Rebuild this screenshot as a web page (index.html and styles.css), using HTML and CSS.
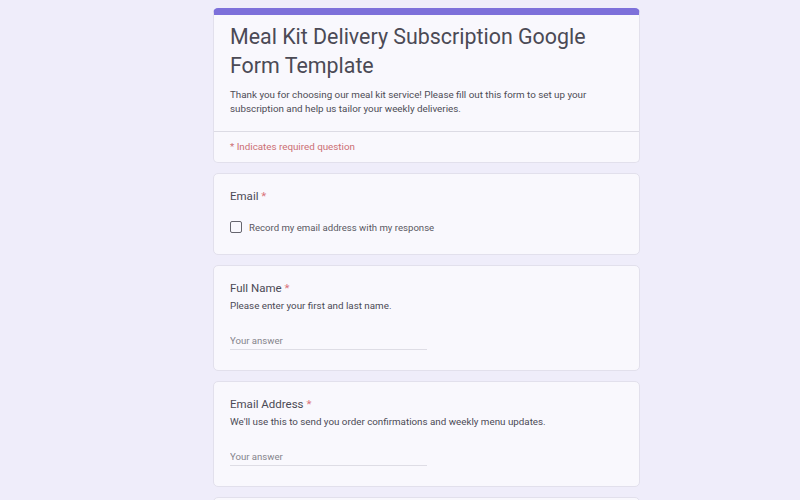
FILE: index.html
```html
<!DOCTYPE html>
<html lang="en">
<head>
    <meta charset="UTF-8">
    <meta name="viewport" content="width=device-width, initial-scale=1.0">
    <title>Meal Kit Delivery Subscription Google Form Template</title>
    <link rel="stylesheet" href="styles.css">
</head>
<body>
    <div class="form-wrap">
        <div class="card header-card">
            <div class="header-main">
                <h1>Meal Kit Delivery Subscription Google Form Template</h1>
                <p class="form-desc">Thank you for choosing our meal kit service! Please fill out this form to set up your subscription and help us tailor your weekly deliveries.</p>
            </div>
            <div class="required-note">* Indicates required question</div>
        </div>

        <div class="card question">
            <div class="q-title">Email <span class="star">*</span></div>
            <label class="check-row">
                <span class="checkbox"></span>
                Record my email address with my response
            </label>
        </div>

        <div class="card question">
            <div class="q-title">Full Name <span class="star">*</span></div>
            <div class="q-desc">Please enter your first and last name.</div>
            <input type="text" class="answer" placeholder="Your answer">
        </div>

        <div class="card question">
            <div class="q-title">Email Address <span class="star">*</span></div>
            <div class="q-desc">We'll use this to send you order confirmations and weekly menu updates.</div>
            <input type="text" class="answer" placeholder="Your answer">
        </div>

        <!-- next question starts below the fold -->
        <div class="card question next-card"></div>
    </div>
</body>
</html>
```

FILE: styles.css
```css
body {
    margin: 0;
    background-color: #efedfa;
    font-family: Roboto, "Liberation Sans", Arial, sans-serif;
    color: #202124;
}
.form-wrap {
    width: 427px;
    margin: 8px 0 0 213px;
    display: flex;
    flex-direction: column;
    gap: 10px;
}
.card {
    background-color: #f9f8fd;
    border: 1px solid #e2e0ec;
    border-radius: 5px;
}
.header-card {
    border-top: 7px solid #7d70da;
}
.header-main {
    padding: 7px 16px 16px;
    border-bottom: 1px solid #dcdbe4;
}
h1 {
    margin: 0;
    font-size: 21.4px;
    font-weight: 400;
    line-height: 29px;
    color: #4b4a55;
}
.form-desc {
    margin: 8px 0 0;
    font-size: 9.8px;
    line-height: 13.5px;
    color: #4d4c55;
}
.required-note {
    padding: 8px 16px 9px;
    font-size: 9.8px;
    line-height: 13px;
    color: #cc6f74;
}
.question {
    padding: 14px 16px 21px;
}
.q-title {
    font-size: 11.5px;
    line-height: 16px;
    color: #4b4a55;
    margin-bottom: 3px;
}
.star {
    color: #d9737a;
}
.q-desc {
    font-size: 9.8px;
    line-height: 14px;
    color: #4b4a55;
}
.check-row {
    display: flex;
    align-items: center;
    gap: 7px;
    margin-top: 17px;
    font-size: 9.6px;
    color: #5a5963;
}
.checkbox {
    width: 10px;
    height: 10px;
    border: 1.5px solid #66656e;
    border-radius: 2px;
}
.answer {
    display: block;
    width: 50%;
    margin: 20px 0 -1px;
    padding: 2px 0 2px;
    border: none;
    border-bottom: 1px solid #dedde5;
    background: transparent;
    font-family: inherit;
    font-size: 9.6px;
    line-height: 12px;
    outline: none;
}
.answer::placeholder {
    color: #85848c;
}
.next-card {
    min-height: 60px;
}
```
